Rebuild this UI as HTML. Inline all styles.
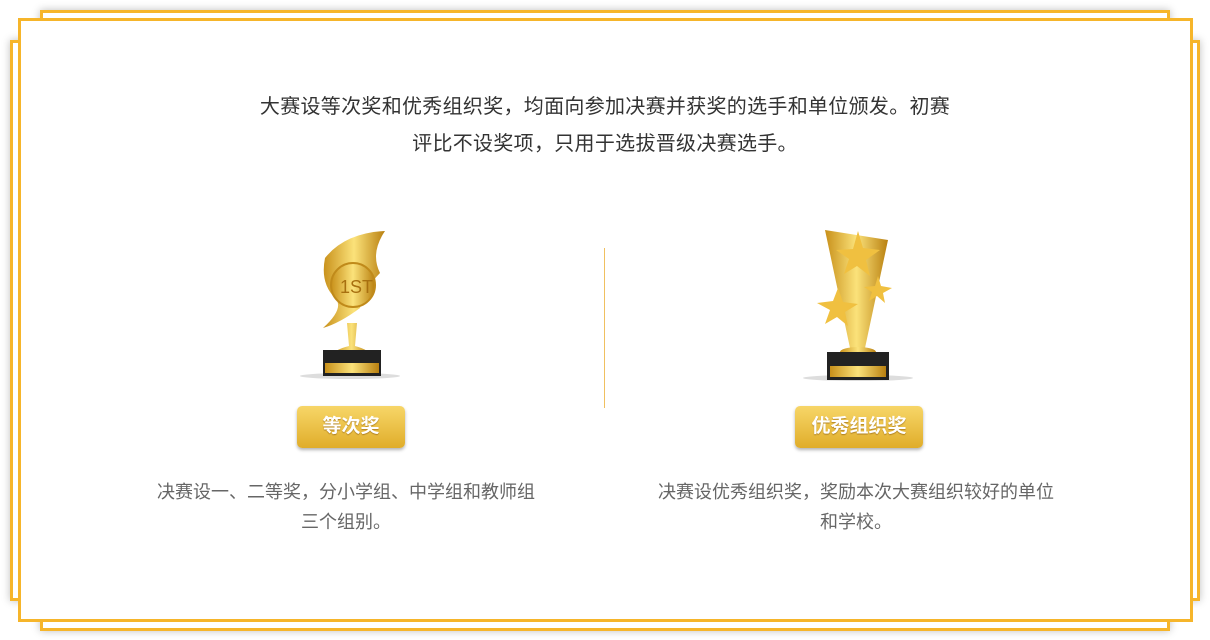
<!DOCTYPE html>
<html><head><meta charset="utf-8"><style>
body{margin:0;width:1210px;height:640px;background:#fff;position:relative;overflow:hidden;font-family:"Liberation Sans","Noto Sans CJK SC",sans-serif}
.b{position:absolute;border:3px solid #f6b52a;background:#fff;box-sizing:border-box;box-shadow:0 0 8px rgba(0,0,0,.25)}
.t{position:absolute;left:0;width:1210px;text-align:center;color:#333;font-size:20px;line-height:37px;letter-spacing:0.3px}
.p{position:absolute;text-align:center;color:#666;font-size:18px;line-height:30px}
.btn{position:absolute;height:42px;border-radius:5px;background:linear-gradient(#f7d668,#e0ad2a);box-shadow:0 2px 3px rgba(0,0,0,.3);color:#fff;font-size:19px;line-height:42px;text-align:center;text-shadow:0 1px 1px rgba(120,70,0,.5);font-weight:bold}
</style></head><body>
<div class="b" style="left:40px;top:10px;width:1130px;height:621px"></div>
<div class="b" style="left:10px;top:40px;width:1190px;height:561px"></div>
<div class="b" style="left:18px;top:18px;width:1175px;height:604px;box-shadow:none"></div>
<div class="t" style="top:89px">大赛设等次奖和优秀组织奖，均面向参加决赛并获奖的选手和单位颁发。初赛<br>评比不设奖项，只用于选拔晋级决赛选手。</div>
<div style="position:absolute;left:604px;top:248px;width:1px;height:160px;background:#f0c060"></div>
<svg style="position:absolute;left:295px;top:228px" width="110" height="155">
<defs><linearGradient id="g" x1="0" x2="1"><stop offset="0" stop-color="#c8901a"/><stop offset=".5" stop-color="#fbe27a"/><stop offset="1" stop-color="#b98010"/></linearGradient></defs>
<ellipse cx="55" cy="148" rx="50" ry="3" fill="#ddd"/>
<path d="M30 30 Q50 5 90 3 Q75 25 85 45 Q70 60 65 80 Q45 95 28 100 Q50 80 40 70 Q25 55 30 30Z" fill="url(#g)"/>
<circle cx="58" cy="57" r="22" fill="url(#g)" stroke="#c08a1a" stroke-width="2"/>
<text x="45" y="65" font-size="18" fill="#a87010" font-family="Liberation Sans">1ST</text>
<path d="M52 95 L62 95 L60 118 Q75 122 75 128 L38 128 Q38 122 54 118Z" fill="url(#g)"/>
<rect x="28" y="122" width="58" height="26" fill="#222"/>
<rect x="30" y="135" width="54" height="10" fill="url(#g)"/>
</svg>
<svg style="position:absolute;left:800px;top:228px" width="120" height="155">
<defs><linearGradient id="h" x1="0" x2="1"><stop offset="0" stop-color="#c8901a"/><stop offset=".5" stop-color="#fbe27a"/><stop offset="1" stop-color="#b98010"/></linearGradient></defs>
<ellipse cx="58" cy="150" rx="55" ry="3" fill="#ddd"/>
<path d="M25 2 L88 12 L65 120 L50 120Z" fill="url(#h)"/>
<path d="M58 3 L63 20 L80 22 L66 32 L70 48 L57 38 L44 46 L49 31 L36 22 L53 21Z" fill="#f0c040"/>
<path d="M38 60 L43 74 L58 76 L45 84 L48 98 L37 89 L25 96 L30 82 L17 75 L33 73Z" fill="#f0c040"/>
<path d="M78 48 L81 58 L92 60 L83 65 L85 75 L77 68 L69 73 L72 64 L64 59 L75 58Z" fill="#f0c040"/>
<ellipse cx="58" cy="124" rx="18" ry="5" fill="url(#h)"/>
<rect x="27" y="124" width="62" height="28" fill="#222"/>
<rect x="30" y="138" width="56" height="11" fill="url(#h)"/>
</svg>
<div class="btn" style="left:297px;top:406px;width:108px">等次奖</div>
<div class="btn" style="left:795px;top:406px;width:128px">优秀组织奖</div>
<div class="p" style="left:146px;top:477px;width:400px">决赛设一、二等奖，分小学组、中学组和教师组<br>三个组别。</div>
<div class="p" style="left:646px;top:477px;width:420px">决赛设优秀组织奖，奖励本次大赛组织较好的单位<br>和学校。</div>
</body></html>
